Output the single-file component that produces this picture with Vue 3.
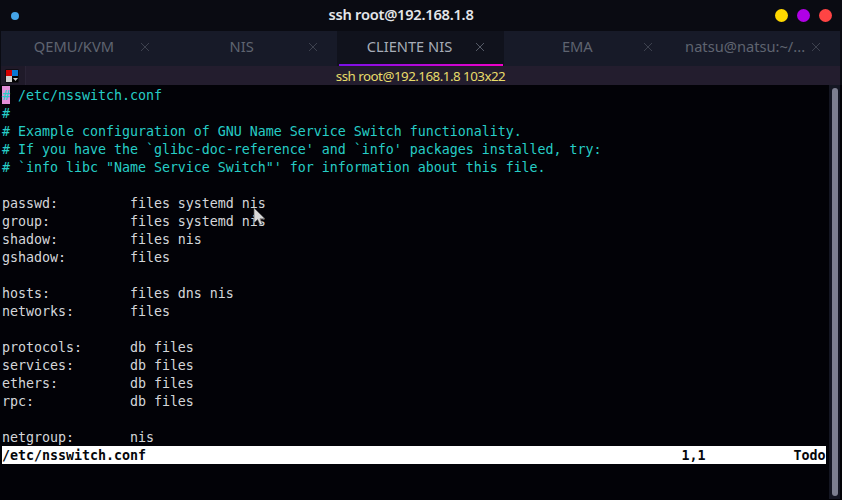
<script setup>
const tabs = [
  { name: 'QEMU/KVM' },
  { name: 'NIS' },
  { name: 'CLIENTE NIS', active: true },
  { name: 'EMA' },
  { name: 'natsu@natsu:~/...' },
]
const comments = [
  '#',
  '# Example configuration of GNU Name Service Switch functionality.',
  "# If you have the `glibc-doc-reference' and `info' packages installed, try:",
  '# `info libc "Name Service Switch"\' for information about this file.',
]
const config = [
  'passwd:         files systemd nis',
  'group:          files systemd nis',
  'shadow:         files nis',
  'gshadow:        files',
  '',
  'hosts:          files dns nis',
  'networks:       files',
  '',
  'protocols:      db files',
  'services:       db files',
  'ethers:         db files',
  'rpc:            db files',
  '',
  'netgroup:       nis',
]
const status = '/etc/nsswitch.conf'.padEnd(85) + '1,1'.padEnd(14) + 'Todo'
</script>

<template>
  <div class="window">
    <header class="titlebar">
      <span class="dot dot-blue"></span>
      <span class="title">ssh root@192.168.1.8</span>
      <div class="controls">
        <span class="ctl ctl-yellow"></span>
        <span class="ctl ctl-purple"></span>
        <span class="ctl ctl-red"></span>
      </div>
    </header>

    <nav class="tabs">
      <div v-for="tab in tabs" :key="tab.name" class="tab" :class="{ active: tab.active }">
        <span class="tab-name">{{ tab.name }}</span>
        <svg class="tab-close" width="10" height="10" viewBox="0 0 10 10">
          <path d="M1 1 L9 9 M9 1 L1 9" stroke="currentColor" stroke-width="1" fill="none" />
        </svg>
      </div>
    </nav>

    <div class="sessionbar">
      <div class="session-icon">
        <svg width="14" height="14" viewBox="0 0 14 14">
          <rect x="0.5" y="0.5" width="13" height="13" fill="#000" />
          <rect x="1" y="1" width="6" height="6" fill="#d40000" />
          <rect x="7" y="1" width="6" height="6" fill="#0a78d4" />
          <rect x="1" y="7" width="6" height="6" fill="#cfcfcf" />
          <path d="M8 9 H13 L10.5 12 Z" fill="#c8c8c8" />
        </svg>
      </div>
      <span class="session-title">ssh root@192.168.1.8 103x22</span>
    </div>

    <main class="terminal">
      <div class="screen">
        <div class="line comment"><span class="cursor">#</span> /etc/nsswitch.conf</div>
        <div v-for="(c, i) in comments" :key="'c' + i" class="line comment">{{ c }}</div>
        <div class="line"></div>
        <div v-for="(c, i) in config" :key="'l' + i" class="line">{{ c }}</div>
        <div class="line status">{{ status }}</div>
      </div>
      <div class="scrolltrack"><div class="scrollthumb"></div></div>
      <svg class="pointer" width="14" height="20" viewBox="0 0 14 20">
        <path d="M1 1 V16 L4.6 12.6 L7 18 L9.4 17 L7 11.8 H12 Z" fill="#d8d8d8" stroke="#555" stroke-width="0.7" />
      </svg>
    </main>
  </div>
</template>

<style>
html, body { margin: 0; background: #020207; }
</style>

<style scoped>
.window {
  position: relative;
  width: 842px;
  height: 500px;
  overflow: hidden;
  display: flex;
  flex-direction: column;
  background: #0a0b12;
  font-family: "Noto Sans", sans-serif;
}
.titlebar {
  height: 31px;
  flex: none;
  display: flex;
  align-items: center;
  position: relative;
  padding: 0 10px 0 11px;
  background: #0a0b12;
}
.dot { width: 8px; height: 8px; border-radius: 50%; }
.dot-blue { background: #45a5e8; }
.title {
  position: absolute;
  left: 0;
  right: 40px;
  top: 4px;
  text-align: center;
  color: #e4e6ea;
  font-size: 14.67px;
  font-weight: 600;
  letter-spacing: -0.25px;
}
.controls { margin-left: auto; display: flex; gap: 9px; position: relative; }
.ctl { width: 13px; height: 13px; border-radius: 50%; }
.ctl-yellow { background: #ffd800; }
.ctl-purple { background: #b000e6; }
.ctl-red { background: #ff4444; }

.tabs {
  height: 35px;
  flex: none;
  margin: 0 2px 0 1px;
  display: grid;
  grid-template-columns: repeat(5, 1fr);
  background: #171a28;
}
.tab {
  display: flex;
  align-items: center;
  padding: 0 19px 4px 7px;
  color: #5f6470;
  font-size: 14.67px;
  box-sizing: border-box;
  border-bottom: 2px solid transparent;
}
.tab-name { flex: 1; text-align: center; white-space: nowrap; }
.tab-close { color: #3d414e; flex: none; position: relative; top: 1px; }
.tab.active {
  background: #10121c;
  color: #a7adb8;
  position: relative;
}
.tab.active .tab-close { color: #555a66; }
.tab.active::after {
  content: "";
  position: absolute;
  left: 2px;
  right: 1px;
  bottom: -2px;
  height: 2px;
  background: linear-gradient(90deg, #7a10e8, #f000c8);
}
.sessionbar {
  height: 19px;
  flex: none;
  margin-right: 2px;
  margin-left: 1px;
  position: relative;
  display: flex;
  align-items: center;
  background: #231d2e;
  color: #e8dc6a;
  font-size: 13.33px;
}
.session-icon {
  width: 25px;
  height: 19px;
  display: flex;
  align-items: center;
  padding-left: 4px;
  box-sizing: border-box;
  background: #1f1a29;
  border-right: 1px solid #2a2436;
}
.session-title { position: absolute; left: 0; right: 0; text-align: center; letter-spacing: -0.5px; }

.terminal {
  position: relative;
  flex: 1;
  background: #020207;
  padding: 1px 0 0 2px;
  font-family: "DejaVu Sans Mono", "Liberation Mono", monospace;
  font-size: 13.33px;
  color: #d4d6da;
}
.screen { width: 824px; }
.line {
  height: 18px;
  line-height: 20px;
  white-space: pre;
  letter-spacing: -0.03px;
}
.comment { color: #26cdc6; }
.cursor { display: inline-block; width: 8px; height: 18px; vertical-align: top; background: #e28fd9; color: #26cdc6; }
.status {
  background: #fff;
  color: #05060a;
  font-weight: 700;
  overflow: hidden;
}
.scrolltrack {
  position: absolute;
  top: 0;
  bottom: 1px;
  right: 2px;
  width: 11px;
  background: #141622;
  box-sizing: border-box;
  padding: 3px 2px 3px 3px;
}
.scrollthumb { height: 100%; background: #7d7f90; border-radius: 3px; }
.pointer { position: absolute; left: 253px; top: 122px; }
</style>
